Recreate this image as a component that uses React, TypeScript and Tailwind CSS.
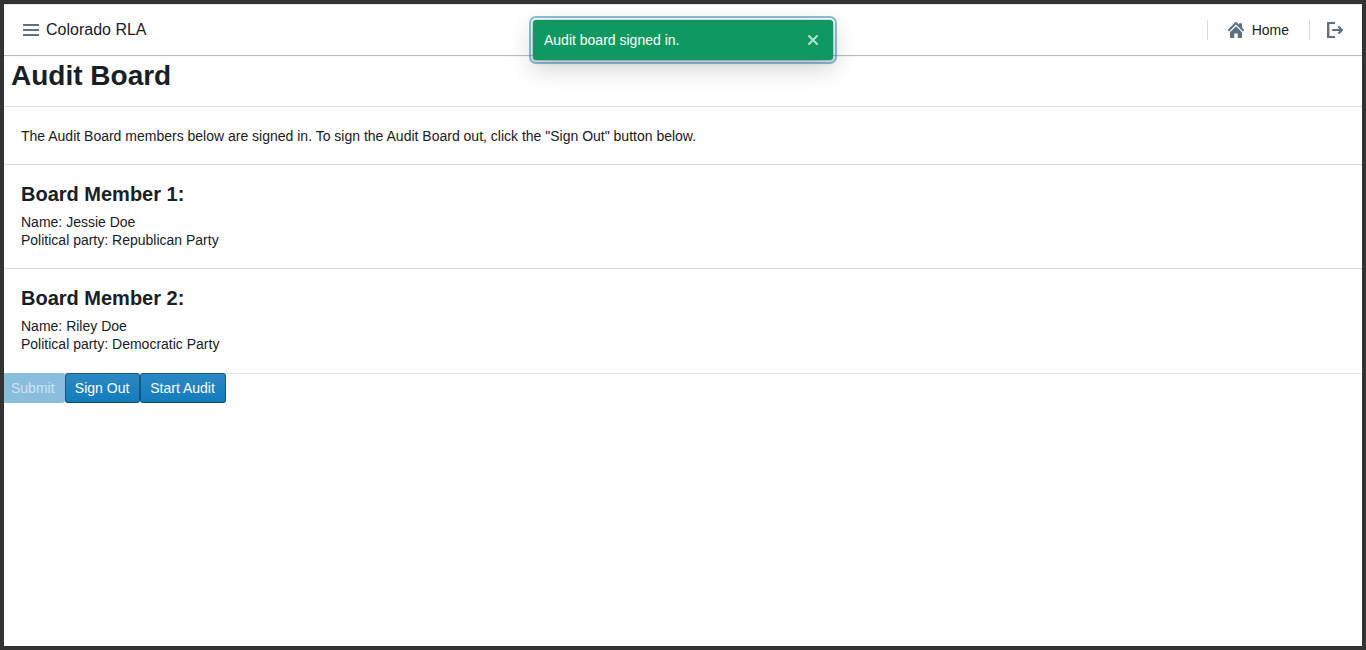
import type { ReactNode } from 'react';

function Icon({ d, className = 'text-[#5c7080]' }: { d: string; className?: string }) {
  return (
    <svg viewBox="0 0 16 16" className={`size-4 shrink-0 fill-current ${className}`} aria-hidden="true">
      <path d={d} />
    </svg>
  );
}

const ICONS = {
  menu: 'M0 2h16v2H0zM0 7h16v2H0zM0 12h16v2H0z',
  home: 'M2 10.2v5.1c0 .4.3.7.7.7H6.3v-4.6h3.4V16h3.6c.4 0 .7-.3.7-.7v-5.1L8 4.2zM15.9 7.5L14 5.6V1.2h-3v1.5L8.7.3C8.5.1 8.2 0 8 0s-.5.1-.7.3L.1 7.5c-.3.3-.2 1 .2 1.4.4.3 1 .4 1.3 0L8 2.6l6.4 6.3c.3.4.9.3 1.3 0 .4-.4.5-1.1.2-1.4z',
  logOut:
    'M0 0h8v2.1H2.4v11.8H8V16H0zM15.71 7.29l-3-3a1.05 1.05 0 00-1.55 1.42L12.4 6.9H6c-.55 0-1 .5-1 1.1s.45 1.1 1 1.1h6.4l-1.24 1.19a1.05 1.05 0 001.55 1.42l3-3c.18-.18.29-.43.29-.71 0-.28-.11-.53-.29-.71z',
  cross:
    'M9.41 8l3.29-3.29a1.003 1.003 0 00-1.42-1.42L8 6.59l-3.29-3.3a1.003 1.003 0 00-1.42 1.42L6.59 8l-3.3 3.29a1.003 1.003 0 001.42 1.42L8 9.41l3.29 3.29a1.003 1.003 0 001.42-1.42L9.41 8z',
};

function Divider() {
  return <span className="h-5 w-px bg-[#10161a]/15" />;
}

function NavBar() {
  return (
    <header className="mt-px flex h-[50px] items-center justify-between px-[19px] shadow-[0_0_0_1px_rgba(16,22,26,0.1),0_1px_1px_rgba(16,22,26,0.2)]">
      <div className="flex items-center gap-[7px]">
        <button type="button" aria-label="Menu">
          <Icon d={ICONS.menu} />
        </button>
        <span className="text-base leading-5">Colorado RLA</span>
      </div>
      <nav className="flex items-center">
        <Divider />
        <a href="#home" className="mx-5 flex items-center gap-2">
          <Icon d={ICONS.home} />
          Home
        </a>
        <Divider />
        <button type="button" aria-label="Log out" className="ml-[17px]">
          <Icon d={ICONS.logOut} />
        </button>
      </nav>
    </header>
  );
}

function Toast() {
  return (
    <div
      role="status"
      className="absolute top-5 left-1/2 flex h-10 w-[300px] -translate-x-1/2 items-center justify-between rounded-[3px] bg-[#0f9960] pr-3 pl-[11px] text-white shadow-[0_0_0_1px_rgba(16,22,26,0.1),0_2px_4px_rgba(16,22,26,0.2),0_8px_24px_rgba(16,22,26,0.2)] outline-2 outline-offset-2 outline-[#137cbd]/50"
    >
      Audit board signed in.
      <button type="button" aria-label="Close">
        <Icon d={ICONS.cross} className="text-white/70" />
      </button>
    </div>
  );
}

function Section({ children, className = 'pb-[19px]' }: { children: ReactNode; className?: string }) {
  return <section className={`border-t border-[#10161a]/15 px-[17px] pt-5 ${className}`}>{children}</section>;
}

function Member({ index, name, party, className }: { index: number; name: string; party: string; className?: string }) {
  return (
    <Section className={className}>
      <h2 className="mb-[10px] text-xl leading-[18px] font-bold">Board Member {index}:</h2>
      <div>Name: {name}</div>
      <div>Political party: {party}</div>
    </Section>
  );
}

const BUTTON =
  'h-[30px] rounded-[3px] bg-[#137cbd] bg-linear-to-b from-white/10 to-white/0 text-white shadow-[inset_0_0_0_1px_rgba(16,22,26,0.4),inset_0_-1px_0_rgba(16,22,26,0.2)]';

export default function App() {
  return (
    <div className="relative flex min-h-screen flex-col bg-[#333333] p-1 font-['Liberation_Sans',Arial,sans-serif] text-sm leading-[18px] text-[#182026]">
      <div className="flow-root grow bg-white">
        <NavBar />
        <main>
          <h1 className="px-[7px] pt-[5px] pb-[14px] text-[28px] leading-8 font-bold">Audit Board</h1>
          <Section>
            The Audit Board members below are signed in. To sign the Audit Board out, click the "Sign Out" button below.
          </Section>
          <Member index={1} name="Jessie Doe" party="Republican Party" />
          <Member index={2} name="Riley Doe" party="Democratic Party" className="pb-5" />
          <div className="flex shadow-[inset_0_1px_0_rgba(16,22,26,0.1)]">
            <button
              type="button"
              disabled
              className="h-[30px] rounded-r-[3px] bg-[#89bdde] pr-[10px] pl-[7px] text-white/60"
            >
              Submit
            </button>
            <button type="button" className={`${BUTTON} min-w-[75px] px-[10px]`}>
              Sign Out
            </button>
            <button type="button" className={`${BUTTON} min-w-[86px] px-[10px]`}>
              Start Audit
            </button>
          </div>
        </main>
      </div>
      <Toast />
    </div>
  );
}
